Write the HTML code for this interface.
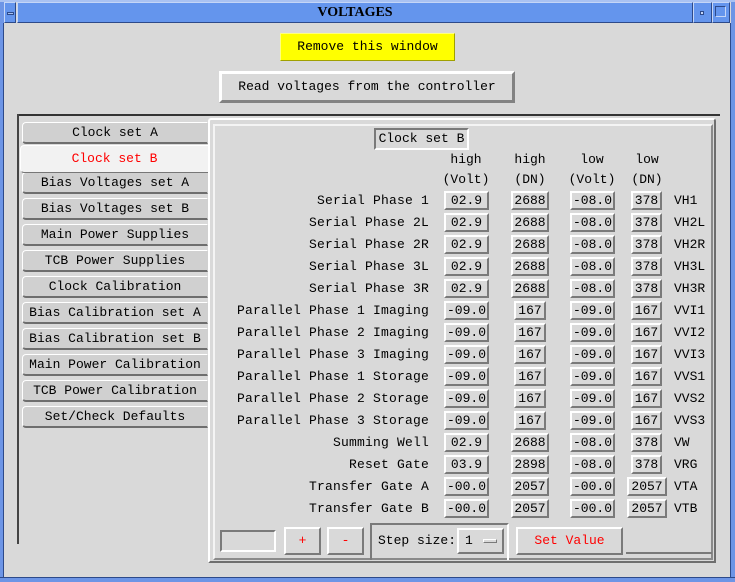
<!DOCTYPE html>
<html><head><style>
*{margin:0;padding:0;box-sizing:border-box}
body{width:735px;height:582px;background:#d9d9d9;position:relative;overflow:hidden;font-family:"Liberation Mono",monospace;font-size:13px;color:#000}
.a{position:absolute}
.r{position:absolute;border:2px solid;border-color:#fff #7a7a7a #7a7a7a #fff;background:#d9d9d9;text-align:center;line-height:15px;height:19px}
.s{position:absolute;border:2px solid;border-color:#7a7a7a #fff #fff #7a7a7a}
.lbl{position:absolute;right:306px;white-space:pre;line-height:15px;letter-spacing:0.2px}
.tab{position:absolute;left:22px;width:186px;height:22px;background:#d0d0d0;border:1px solid;border-color:#fff #d0d0d0 #6e6e6e #fff;border-bottom-width:2px;border-radius:4px 0 0 4px;text-align:center;line-height:19px;white-space:pre}
.rl{position:absolute;left:674px;line-height:15px}
.h{position:absolute;text-align:center;width:60px;line-height:15px}
</style></head><body>
<div class="a" style="left:0;top:0;width:735px;height:582px;border:4px solid #6d95e6;border-top:0;"></div>
<div class="a" style="left:0;top:0;width:735px;height:2px;background:#a9c2f2"></div>
<div class="a" style="left:4px;top:2px;width:12px;height:21px;background:#6495ed;border:1px solid;border-color:#c5d6f7 #2d4a8a #2d4a8a #c5d6f7"></div>
<div class="a" style="left:7px;top:12px;width:7px;height:3px;border:1px solid #2d4a8a;background:#a9c2f2"></div>
<div class="a" style="left:17px;top:2px;width:676px;height:21px;background:#6495ed;border:1px solid;border-color:#c5d6f7 #2d4a8a #2d4a8a #c5d6f7;text-align:center;font-family:'Liberation Serif',serif;font-size:14px;font-weight:bold;line-height:20px">VOLTAGES</div>
<div class="a" style="left:693px;top:2px;width:19px;height:21px;background:#6495ed;border:1px solid;border-color:#c5d6f7 #2d4a8a #2d4a8a #c5d6f7"></div>
<div class="a" style="left:700px;top:11px;width:4px;height:4px;border:1px solid #2d4a8a;background:#c5d6f7"></div>
<div class="a" style="left:712px;top:2px;width:18px;height:21px;background:#6495ed;border:1px solid;border-color:#c5d6f7 #2d4a8a #2d4a8a #c5d6f7"></div>
<div class="a" style="left:715px;top:6px;width:11px;height:11px;border:1px solid #2d4a8a;border-color:#2d4a8a #c5d6f7 #c5d6f7 #2d4a8a"></div>
<div class="a" style="left:0;top:23px;width:4px;height:559px;background:#6d95e6;border-right:1px solid #2d4a8a"></div>
<div class="a" style="left:730px;top:23px;width:5px;height:559px;background:#6d95e6;border-left:1px solid #2d4a8a"></div>
<div class="a" style="left:0;top:577px;width:735px;height:5px;background:#6d95e6;border-top:1px solid #2d4a8a"></div>

<div class="a" style="left:280px;top:33px;width:175px;height:28px;background:#ffff00;border:1px solid;border-color:#ffff80 #a0a000 #a0a000 #ffff80;text-align:center;line-height:26px">Remove this window</div>
<div class="a" style="left:219px;top:71px;width:296px;height:32px;border:3px solid;border-color:#fff #828282 #828282 #fff;text-align:center;line-height:26px">Read voltages from the controller</div>

<div class="a" style="left:17px;top:114px;width:703px;height:2px;background:#333"></div>
<div class="a" style="left:17px;top:114px;width:2px;height:430px;background:#444"></div>
<div class="tab" style="top:122px">Clock set A</div>
<div class="tab" style="top:198px">Bias Voltages set B</div>
<div class="tab" style="top:172px">Bias Voltages set A</div>
<div class="tab" style="top:224px">Main Power Supplies</div>
<div class="tab" style="top:250px">TCB Power Supplies</div>
<div class="tab" style="top:276px">Clock Calibration</div>
<div class="tab" style="top:302px">Bias Calibration set A</div>
<div class="tab" style="top:328px">Bias Calibration set B</div>
<div class="tab" style="top:354px">Main Power Calibration</div>
<div class="tab" style="top:380px">TCB Power Calibration</div>
<div class="tab" style="top:406px">Set/Check Defaults</div>
<div class="a" style="left:20px;top:145px;width:189px;height:28px;background:#f2f2f2;border-radius:4px 0 0 4px;border:1px solid;border-color:#fff #999 #777 #fff;color:#f00;text-align:center;line-height:26px;border-right:1px dashed #999">Clock set B</div>

<div class="a" style="left:208px;top:118px;width:508px;height:445px;background:#d9d9d9;border:2px solid;border-color:#fff #6e6e6e #6e6e6e #fff;border-radius:3px 3px 0 0"></div>
<div class="a" style="left:213px;top:124px;width:500px;height:436px;border:2px solid;border-color:#f4f4f4 #8a8a8a #8a8a8a #f4f4f4"></div>

<div class="a" style="left:374px;top:128px;width:95px;height:22px;border:2px solid;border-color:#7a7a7a #fff #fff #7a7a7a;line-height:18px;text-align:center">Clock set B</div>

<div class="h" style="left:436px;top:152px">high</div>
<div class="h" style="left:500px;top:152px">high</div>
<div class="h" style="left:562px;top:152px">low</div>
<div class="h" style="left:617px;top:152px">low</div>
<div class="h" style="left:436px;top:172px">(Volt)</div>
<div class="h" style="left:500px;top:172px">(DN)</div>
<div class="h" style="left:562px;top:172px">(Volt)</div>
<div class="h" style="left:617px;top:172px">(DN)</div>

<div class="lbl" style="top:193px">Serial Phase 1</div><div class="r" style="left:444px;top:191px;width:45px">02.9</div><div class="r" style="left:511px;top:191px;width:38px">2688</div><div class="r" style="left:570px;top:191px;width:45px">-08.0</div><div class="r" style="left:631px;top:191px;width:31px">378</div><div class="rl" style="top:193px">VH1</div>
<div class="lbl" style="top:215px">Serial Phase 2L</div><div class="r" style="left:444px;top:213px;width:45px">02.9</div><div class="r" style="left:511px;top:213px;width:38px">2688</div><div class="r" style="left:570px;top:213px;width:45px">-08.0</div><div class="r" style="left:631px;top:213px;width:31px">378</div><div class="rl" style="top:215px">VH2L</div>
<div class="lbl" style="top:237px">Serial Phase 2R</div><div class="r" style="left:444px;top:235px;width:45px">02.9</div><div class="r" style="left:511px;top:235px;width:38px">2688</div><div class="r" style="left:570px;top:235px;width:45px">-08.0</div><div class="r" style="left:631px;top:235px;width:31px">378</div><div class="rl" style="top:237px">VH2R</div>
<div class="lbl" style="top:259px">Serial Phase 3L</div><div class="r" style="left:444px;top:257px;width:45px">02.9</div><div class="r" style="left:511px;top:257px;width:38px">2688</div><div class="r" style="left:570px;top:257px;width:45px">-08.0</div><div class="r" style="left:631px;top:257px;width:31px">378</div><div class="rl" style="top:259px">VH3L</div>
<div class="lbl" style="top:281px">Serial Phase 3R</div><div class="r" style="left:444px;top:279px;width:45px">02.9</div><div class="r" style="left:511px;top:279px;width:38px">2688</div><div class="r" style="left:570px;top:279px;width:45px">-08.0</div><div class="r" style="left:631px;top:279px;width:31px">378</div><div class="rl" style="top:281px">VH3R</div>
<div class="lbl" style="top:303px">Parallel Phase 1 Imaging</div><div class="r" style="left:444px;top:301px;width:45px">-09.0</div><div class="r" style="left:514px;top:301px;width:32px">167</div><div class="r" style="left:570px;top:301px;width:45px">-09.0</div><div class="r" style="left:631px;top:301px;width:31px">167</div><div class="rl" style="top:303px">VVI1</div>
<div class="lbl" style="top:325px">Parallel Phase 2 Imaging</div><div class="r" style="left:444px;top:323px;width:45px">-09.0</div><div class="r" style="left:514px;top:323px;width:32px">167</div><div class="r" style="left:570px;top:323px;width:45px">-09.0</div><div class="r" style="left:631px;top:323px;width:31px">167</div><div class="rl" style="top:325px">VVI2</div>
<div class="lbl" style="top:347px">Parallel Phase 3 Imaging</div><div class="r" style="left:444px;top:345px;width:45px">-09.0</div><div class="r" style="left:514px;top:345px;width:32px">167</div><div class="r" style="left:570px;top:345px;width:45px">-09.0</div><div class="r" style="left:631px;top:345px;width:31px">167</div><div class="rl" style="top:347px">VVI3</div>
<div class="lbl" style="top:369px">Parallel Phase 1 Storage</div><div class="r" style="left:444px;top:367px;width:45px">-09.0</div><div class="r" style="left:514px;top:367px;width:32px">167</div><div class="r" style="left:570px;top:367px;width:45px">-09.0</div><div class="r" style="left:631px;top:367px;width:31px">167</div><div class="rl" style="top:369px">VVS1</div>
<div class="lbl" style="top:391px">Parallel Phase 2 Storage</div><div class="r" style="left:444px;top:389px;width:45px">-09.0</div><div class="r" style="left:514px;top:389px;width:32px">167</div><div class="r" style="left:570px;top:389px;width:45px">-09.0</div><div class="r" style="left:631px;top:389px;width:31px">167</div><div class="rl" style="top:391px">VVS2</div>
<div class="lbl" style="top:413px">Parallel Phase 3 Storage</div><div class="r" style="left:444px;top:411px;width:45px">-09.0</div><div class="r" style="left:514px;top:411px;width:32px">167</div><div class="r" style="left:570px;top:411px;width:45px">-09.0</div><div class="r" style="left:631px;top:411px;width:31px">167</div><div class="rl" style="top:413px">VVS3</div>
<div class="lbl" style="top:435px">Summing Well</div><div class="r" style="left:444px;top:433px;width:45px">02.9</div><div class="r" style="left:511px;top:433px;width:38px">2688</div><div class="r" style="left:570px;top:433px;width:45px">-08.0</div><div class="r" style="left:631px;top:433px;width:31px">378</div><div class="rl" style="top:435px">VW</div>
<div class="lbl" style="top:457px">Reset Gate</div><div class="r" style="left:444px;top:455px;width:45px">03.9</div><div class="r" style="left:511px;top:455px;width:38px">2898</div><div class="r" style="left:570px;top:455px;width:45px">-08.0</div><div class="r" style="left:631px;top:455px;width:31px">378</div><div class="rl" style="top:457px">VRG</div>
<div class="lbl" style="top:479px">Transfer Gate A</div><div class="r" style="left:444px;top:477px;width:45px">-00.0</div><div class="r" style="left:511px;top:477px;width:38px">2057</div><div class="r" style="left:570px;top:477px;width:45px">-00.0</div><div class="r" style="left:627px;top:477px;width:40px">2057</div><div class="rl" style="top:479px">VTA</div>
<div class="lbl" style="top:501px">Transfer Gate B</div><div class="r" style="left:444px;top:499px;width:45px">-00.0</div><div class="r" style="left:511px;top:499px;width:38px">2057</div><div class="r" style="left:570px;top:499px;width:45px">-00.0</div><div class="r" style="left:627px;top:499px;width:40px">2057</div><div class="rl" style="top:501px">VTB</div>

<div class="s" style="left:220px;top:530px;width:56px;height:22px"></div>
<div class="r" style="left:284px;top:527px;width:37px;height:28px;line-height:24px;color:#f00">+</div>
<div class="r" style="left:327px;top:527px;width:37px;height:28px;line-height:24px;color:#f00">-</div>
<div class="a" style="left:370px;top:523px;width:139px;height:37px;border:2px solid;border-color:#7a7a7a #fff #fff #7a7a7a;border-bottom:0"></div>
<div class="a" style="left:378px;top:533px;line-height:15px">Step size:</div>
<div class="r" style="left:457px;top:528px;width:47px;height:26px;line-height:22px;text-align:left;padding-left:6px">1</div>
<div class="a" style="left:483px;top:539px;width:14px;height:4px;border:1px solid;border-color:#fff #7a7a7a #7a7a7a #fff"></div>
<div class="r" style="left:516px;top:527px;width:107px;height:28px;line-height:24px;color:#f00">Set Value</div>
<div class="a" style="left:626px;top:552px;width:86px;height:2px;background:#7a7a7a"></div>
</body></html>
